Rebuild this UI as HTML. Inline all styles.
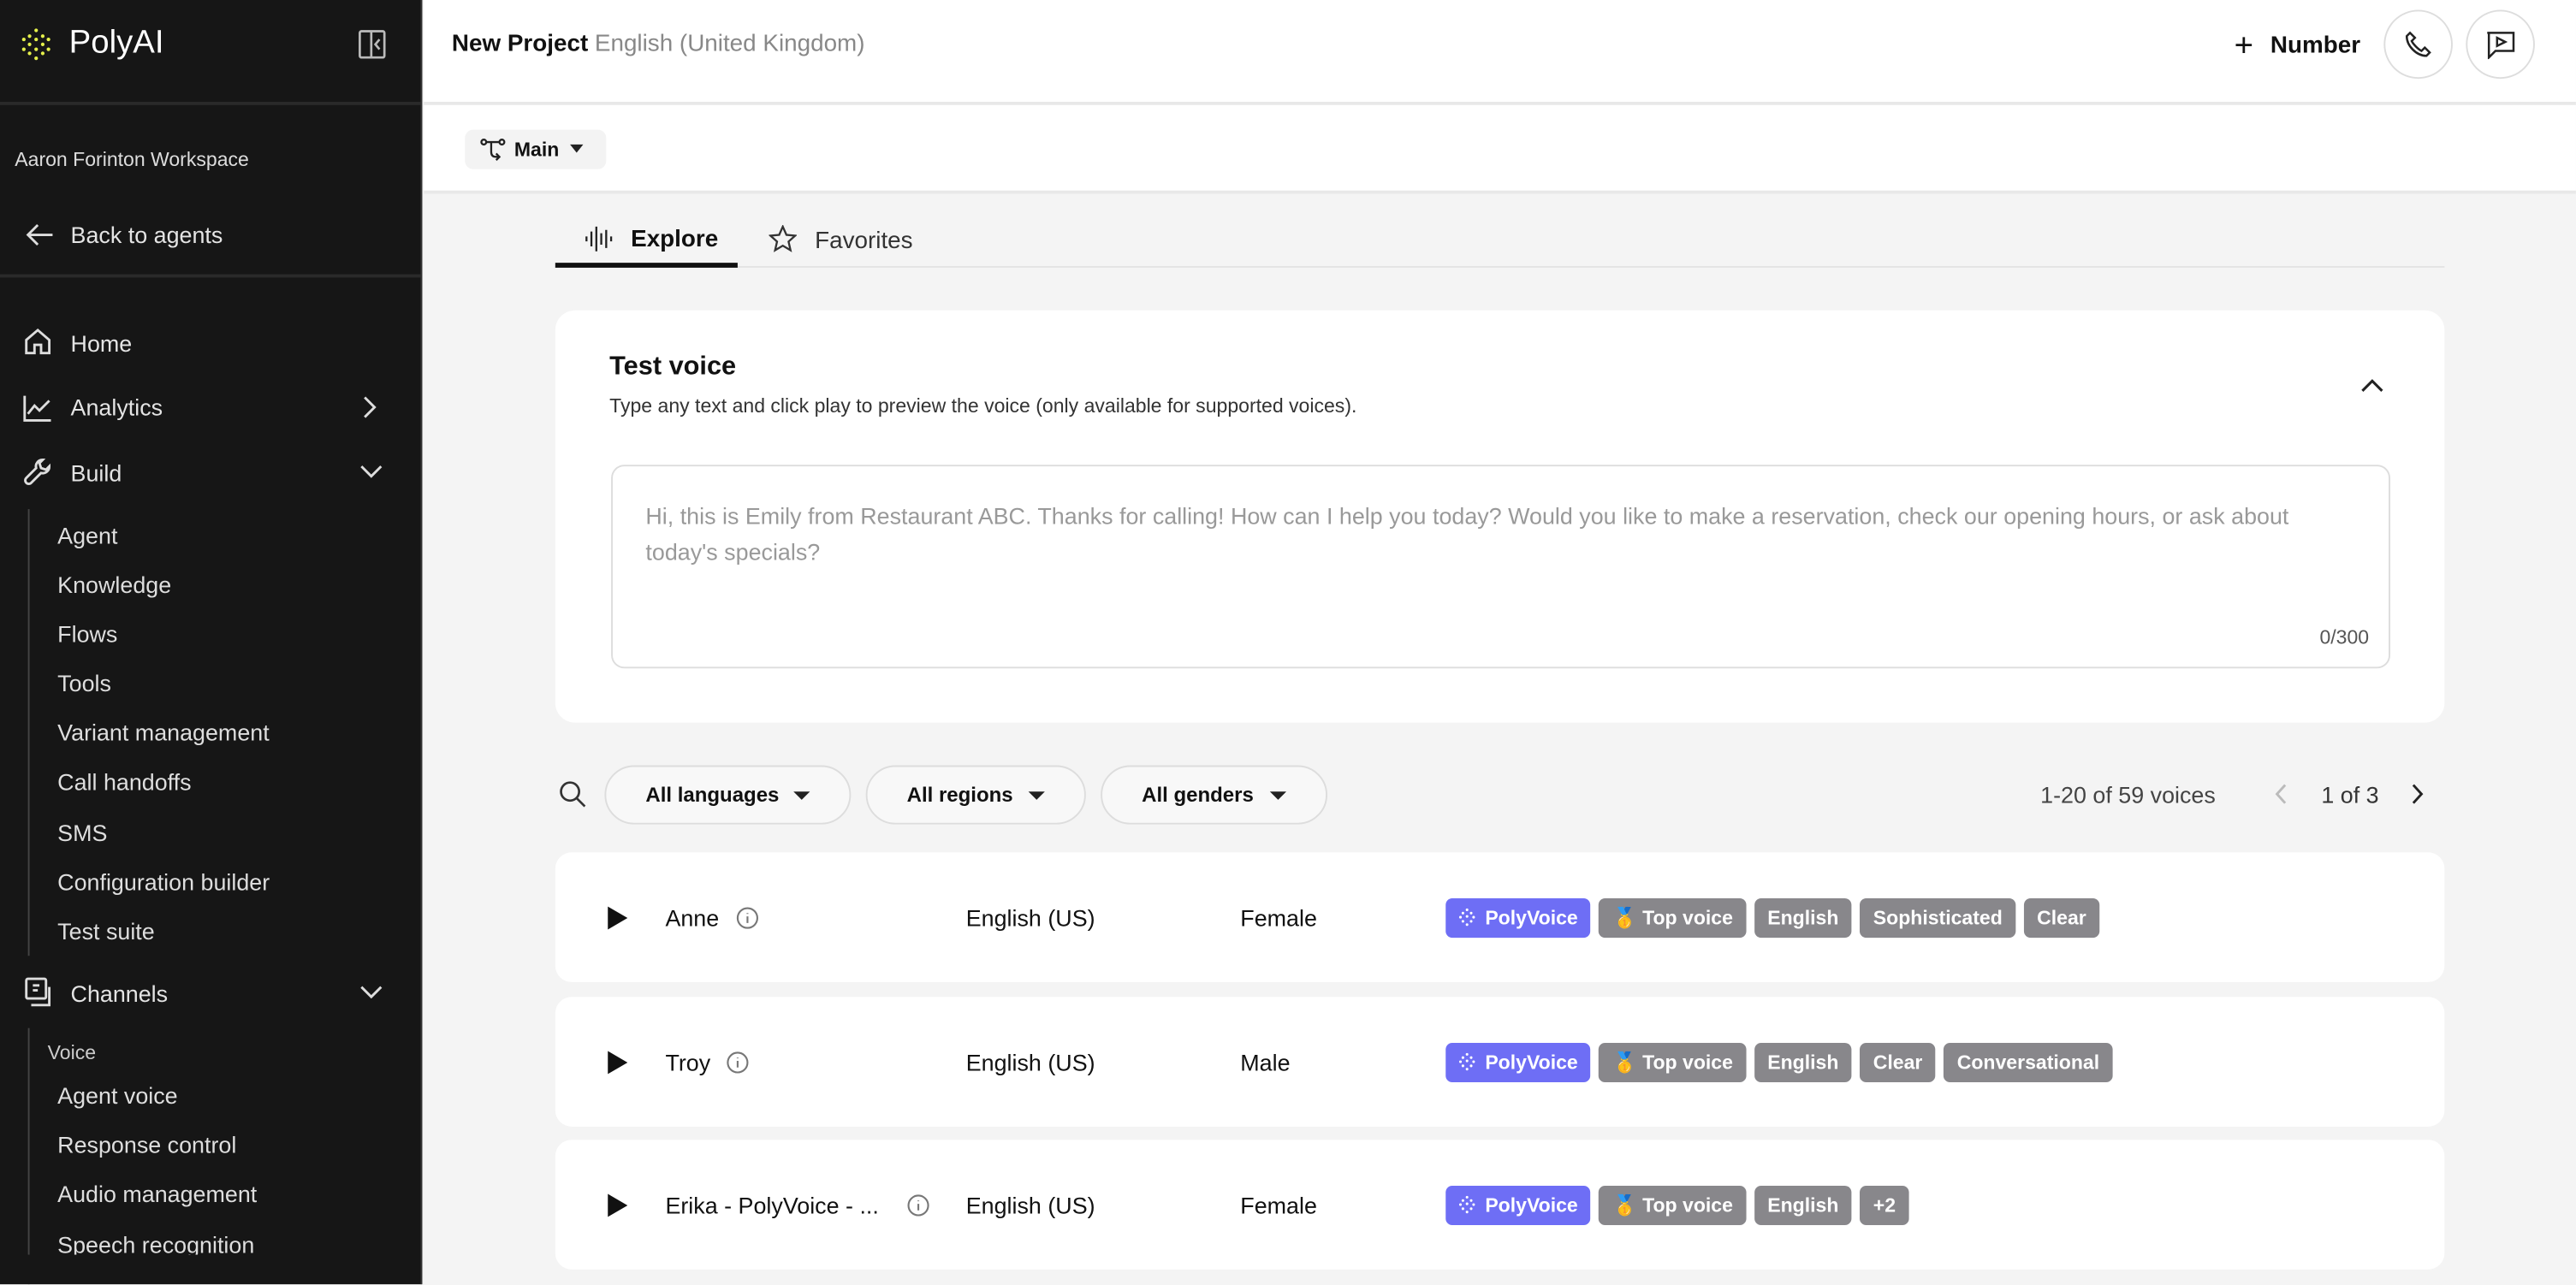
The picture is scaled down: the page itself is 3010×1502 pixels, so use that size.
<!DOCTYPE html>
<html><head><meta charset="utf-8"><style>
*{box-sizing:border-box;margin:0;padding:0}
html,body{width:3010px;height:1502px;overflow:hidden;background:#f4f4f4}
#w{width:1568px;height:782px;transform:scale(1.9196);transform-origin:0 0;position:relative;font-family:"Liberation Sans",sans-serif;color:#111}
.a{position:absolute;white-space:nowrap}
#sb{position:absolute;left:0;top:0;width:257px;height:782px;background:#161616;border-right:1px solid #333;color:#ddd;overflow:hidden}
.hr{position:absolute;left:0;width:257px;height:2px;background:#2a2a2a}
.ni{position:absolute;left:43px;font-size:14px;color:#e4e4e4}
.si{position:absolute;left:35px;font-size:14px;color:#dedede}
.ic{position:absolute;left:14px}
.tag{display:inline-block;height:24px;line-height:24px;padding:0 8px;border-radius:4px;background:#88878b;color:#fff;font-size:12px;font-weight:bold;margin-right:5px;vertical-align:top}
.tag.p{background:#6e6ef5}
.row{position:absolute;left:338px;width:1150px;height:79px;background:#fff;border-radius:10px}
.row .a{top:50%;transform:translateY(-50%);font-size:14px}
.pill{position:absolute;top:466px;height:36px;border:1px solid #ddd;border-radius:18px;background:#f8f8f8;font-size:12.5px;font-weight:bold;line-height:34px;padding-left:24px}
.pill:after{content:"";position:absolute;right:24px;top:15px;border:5px solid transparent;border-top:5px solid #222}
</style></head><body><div id="w">
<svg width="0" height="0" style="position:absolute"><defs><g id="pv" fill="#fff"><circle cx="5" cy="1" r=".8"/><circle cx="2.5" cy="3" r=".8"/><circle cx="7.5" cy="3" r=".8"/><circle cx="1" cy="5.5" r=".8"/><circle cx="9" cy="5.5" r=".8"/><circle cx="5" cy="5" r=".8"/><circle cx="2.5" cy="8" r=".8"/><circle cx="7.5" cy="8" r=".8"/><circle cx="5" cy="10" r=".8"/></g></defs></svg>
<div id="sb">
 <svg class="a" style="left:13px;top:17px" width="18" height="20" viewBox="0 0 18 20" fill="#e5f04b"><circle cx="9" cy="1.5" r="1.1"/><circle cx="5" cy="5" r="1.1"/><circle cx="13" cy="5" r="1.1"/><circle cx="1.5" cy="7" r="1.1"/><circle cx="16.5" cy="7" r="1.1"/><circle cx="9" cy="7" r="1.1"/><circle cx="5" cy="10" r="1.1"/><circle cx="13" cy="10" r="1.1"/><circle cx="1.5" cy="13" r="1.1"/><circle cx="16.5" cy="13" r="1.1"/><circle cx="9" cy="13" r="1.1"/><circle cx="5" cy="15.5" r="1.1"/><circle cx="13" cy="15.5" r="1.1"/><circle cx="9" cy="18.5" r="1.1"/></svg>
 <div class="a" style="left:42px;top:15px;font-size:20px;color:#fff">PolyAI</div>
 <svg class="a" style="left:218px;top:18px" width="17" height="18" viewBox="0 0 17 18" fill="none" stroke="#bbb" stroke-width="1.4"><rect x="1" y="1" width="15" height="16" rx="1"/><path d="M8 1v16M13 6l-2.5 3 2.5 3"/></svg>
 <div class="hr" style="top:62px"></div>
 <div class="a" style="left:9px;top:90px;font-size:12px;color:#ddd">Aaron Forinton Workspace</div>
 <svg class="a" style="left:15px;top:135px" width="18" height="16" viewBox="0 0 18 16" fill="none" stroke="#ddd" stroke-width="1.5"><path d="M17 8H2M8 2L2 8l6 6"/></svg>
 <div class="ni" style="top:135px">Back to agents</div>
 <div class="hr" style="top:167px"></div>
 <svg class="ic" style="top:199px" width="18" height="18" viewBox="0 0 18 18" fill="none" stroke="#ddd" stroke-width="1.5"><path d="M2 8l7-6 7 6v8H11v-5H7v5H2z"/></svg><div class="ni" style="top:201px">Home</div>
 <svg class="ic" style="top:239px" width="18" height="18" viewBox="0 0 18 18" fill="none" stroke="#ddd" stroke-width="1.5"><path d="M1 2v15h16M3 13l4-5 3 3 6-6"/></svg><div class="ni" style="top:240px">Analytics</div>
 <svg class="a" style="left:220px;top:240px" width="10" height="16" viewBox="0 0 10 16" fill="none" stroke="#ddd" stroke-width="1.5"><path d="M2 2l6 6-6 6"/></svg>
 <svg class="ic" style="top:278px" width="18" height="18" viewBox="0 0 18 18" fill="none" stroke="#ddd" stroke-width="1.5"><path d="M12 2a4 4 0 0 0-4 5L2 13a2 2 0 0 0 3 3l6-6a4 4 0 0 0 5-4l-2 2-3-1-1-3z"/></svg><div class="ni" style="top:280px">Build</div>
 <svg class="a" style="left:218px;top:282px" width="16" height="10" viewBox="0 0 16 10" fill="none" stroke="#ddd" stroke-width="1.5"><path d="M2 2l6 6 6-6"/></svg>
 <div class="a" style="left:17px;top:310px;width:1px;height:272px;background:#444"></div>
 <div class="si" style="top:318px">Agent</div><div class="si" style="top:348px">Knowledge</div><div class="si" style="top:378px">Flows</div><div class="si" style="top:408px">Tools</div><div class="si" style="top:438px">Variant management</div><div class="si" style="top:468px">Call handoffs</div><div class="si" style="top:499px">SMS</div><div class="si" style="top:529px">Configuration builder</div><div class="si" style="top:559px">Test suite</div>
 <svg class="ic" style="top:595px" width="18" height="18" viewBox="0 0 18 18" fill="none" stroke="#ddd" stroke-width="1.5"><rect x="2" y="1" width="12" height="12" rx="1"/><path d="M5 17h11V6M6 5h4M6 8h3"/></svg><div class="ni" style="top:597px">Channels</div>
 <svg class="a" style="left:218px;top:599px" width="16" height="10" viewBox="0 0 16 10" fill="none" stroke="#ddd" stroke-width="1.5"><path d="M2 2l6 6 6-6"/></svg>
 <div class="a" style="left:17px;top:626px;width:1px;height:160px;background:#444"></div>
 <div class="a" style="left:29px;top:634px;font-size:12px;color:#ccc">Voice</div>
 <div class="si" style="top:659px">Agent voice</div><div class="si" style="top:689px">Response control</div><div class="si" style="top:719px">Audio management</div><div class="si" style="top:750px">Speech recognition</div>
 <div class="a" style="left:0;top:764px;width:257px;height:18px;background:#161616"></div>
</div>
<div class="a" style="left:258px;top:0;width:1310px;height:64px;background:#fff;border-bottom:2px solid #e8e8e8"></div>
<div class="a" style="left:275px;top:19px;font-size:14.5px;font-weight:bold">New Project</div>
<div class="a" style="left:362px;top:19px;font-size:14.5px;color:#888">English (United Kingdom)</div>
<div class="a" style="left:1360px;top:17px;font-size:20px">+</div>
<div class="a" style="left:1382px;top:20px;font-size:14.5px;font-weight:bold">Number</div>
<div class="a" style="left:1451px;top:6px;width:42px;height:42px;border:1px solid #ddd;border-radius:50%"></div>
<svg class="a" style="left:1464px;top:19px" width="16" height="16" viewBox="0 0 16 16" fill="none" stroke="#222" stroke-width="1.3"><path d="M3 1l3 3-2 2c1 2 4 5 6 6l2-2 3 3-2 2C7 15 1 9 1 3z"/></svg>
<div class="a" style="left:1501px;top:6px;width:42px;height:42px;border:1px solid #ddd;border-radius:50%"></div>
<svg class="a" style="left:1513px;top:19px" width="18" height="17" viewBox="0 0 18 17" fill="none" stroke="#222" stroke-width="1.3"><path d="M1 1h16v11H6l-4 4V1z"/><path d="M7 4l5 2.5L7 9z"/></svg>
<div class="a" style="left:258px;top:64px;width:1310px;height:54px;background:#fff;border-bottom:2px solid #e8e8e8"></div>
<div class="a" style="left:283px;top:79px;width:86px;height:24px;background:#f3f3f3;border-radius:5px"></div>
<svg class="a" style="left:292px;top:84px" width="16" height="14" viewBox="0 0 16 14" fill="none" stroke="#222" stroke-width="1.2"><circle cx="2.5" cy="2.5" r="1.5"/><circle cx="13.5" cy="2.5" r="1.5"/><path d="M4 2.5h8M7 2.5v6c0 2 1 3 3 3h2M10 9.5l2 2-2 2"/></svg>
<div class="a" style="left:313px;top:84px;font-size:12px;font-weight:bold">Main</div>
<div class="a" style="left:347px;top:88px;border:4.5px solid transparent;border-top:5px solid #222"></div>
<div class="a" style="left:338px;top:162px;width:1150px;height:1px;background:#e3e3e3"></div>
<div class="a" style="left:338px;top:160px;width:111px;height:3px;background:#111"></div>
<svg class="a" style="left:356px;top:137px" width="18" height="17" viewBox="0 0 18 17" fill="none" stroke="#222" stroke-width="1.2"><path d="M1 7v3M4 4v9M7 1v15M10 5v7M13 3v11M16 7v3"/></svg>
<div class="a" style="left:384px;top:138px;font-size:14.5px;font-weight:bold">Explore</div>
<svg class="a" style="left:468px;top:137px" width="17" height="17" viewBox="0 0 17 17" fill="none" stroke="#333" stroke-width="1.2"><path d="M8.5 1l2.2 5 5.3.5-4 3.6 1.2 5.3-4.7-2.8-4.7 2.8 1.2-5.3-4-3.6 5.3-.5z"/></svg>
<div class="a" style="left:496px;top:139px;font-size:14.5px;color:#333">Favorites</div>
<div class="a" style="left:338px;top:189px;width:1150px;height:251px;background:#fff;border-radius:12px"></div>
<div class="a" style="left:371px;top:215px;font-size:16px;font-weight:bold">Test voice</div>
<div class="a" style="left:371px;top:240px;font-size:12px;color:#333">Type any text and click play to preview the voice (only available for supported voices).</div>
<svg class="a" style="left:1437px;top:230px" width="14" height="9" viewBox="0 0 14 9" fill="none" stroke="#222" stroke-width="1.6"><path d="M1 8l6-6 6 6"/></svg>
<div class="a" style="left:372px;top:283px;width:1083px;height:124px;border:1px solid #ddd;border-radius:8px"></div>
<div class="a" style="left:393px;top:303px;font-size:14px;color:#999;line-height:22px;white-space:normal;width:1040px">Hi, this is Emily from Restaurant ABC. Thanks for calling! How can I help you today? Would you like to make a reservation, check our opening hours, or ask about today's specials?</div>
<div class="a" style="left:1412px;top:381px;font-size:12px;color:#555">0/300</div>
<svg class="a" style="left:340px;top:475px" width="17" height="17" viewBox="0 0 17 17" fill="none" stroke="#333" stroke-width="1.4"><circle cx="7" cy="7" r="5.5"/><path d="M11 11l5 5"/></svg>
<div class="pill" style="left:368px;width:150px">All languages</div>
<div class="pill" style="left:527px;width:134px">All regions</div>
<div class="pill" style="left:670px;width:138px">All genders</div>
<div class="a" style="left:1242px;top:476px;font-size:14px;color:#444">1-20 of 59 voices</div>
<svg class="a" style="left:1384px;top:477px" width="9" height="13" viewBox="0 0 9 13" fill="none" stroke="#bbb" stroke-width="1.5"><path d="M7 1L2 6.5 7 12"/></svg>
<div class="a" style="left:1413px;top:476px;font-size:14px;color:#333">1 of 3</div>
<svg class="a" style="left:1467px;top:477px" width="9" height="13" viewBox="0 0 9 13" fill="none" stroke="#222" stroke-width="1.5"><path d="M2 1l5 5.5L2 12"/></svg>

<div class="row" style="top:519px">
 <svg class="a" style="left:31px" width="14" height="16" viewBox="0 0 14 16"><path d="M1 1l12 7-12 7z" fill="#111"/></svg>
 <div class="a" style="left:67px">Anne</div>
 <svg class="a" style="left:110px" width="14" height="14" viewBox="0 0 14 14" fill="none" stroke="#777" stroke-width="1.1"><circle cx="7" cy="7" r="6"/><path d="M7 6v4M7 4v.5"/></svg>
 <div class="a" style="left:250px">English (US)</div>
 <div class="a" style="left:417px">Female</div>
 <div class="a" style="left:542px"><span class="tag p"><svg width="10" height="11" style="vertical-align:-1px;margin-right:6px"><use href="#pv"/></svg>PolyVoice</span><span class="tag">🥇 Top voice</span><span class="tag">English</span><span class="tag">Sophisticated</span><span class="tag">Clear</span></div>
</div>
<div class="row" style="top:607px">
 <svg class="a" style="left:31px" width="14" height="16" viewBox="0 0 14 16"><path d="M1 1l12 7-12 7z" fill="#111"/></svg>
 <div class="a" style="left:67px">Troy</div>
 <svg class="a" style="left:104px" width="14" height="14" viewBox="0 0 14 14" fill="none" stroke="#777" stroke-width="1.1"><circle cx="7" cy="7" r="6"/><path d="M7 6v4M7 4v.5"/></svg>
 <div class="a" style="left:250px">English (US)</div>
 <div class="a" style="left:417px">Male</div>
 <div class="a" style="left:542px"><span class="tag p"><svg width="10" height="11" style="vertical-align:-1px;margin-right:6px"><use href="#pv"/></svg>PolyVoice</span><span class="tag">🥇 Top voice</span><span class="tag">English</span><span class="tag">Clear</span><span class="tag">Conversational</span></div>
</div>
<div class="row" style="top:694px">
 <svg class="a" style="left:31px" width="14" height="16" viewBox="0 0 14 16"><path d="M1 1l12 7-12 7z" fill="#111"/></svg>
 <div class="a" style="left:67px">Erika - PolyVoice - ...</div>
 <svg class="a" style="left:214px" width="14" height="14" viewBox="0 0 14 14" fill="none" stroke="#777" stroke-width="1.1"><circle cx="7" cy="7" r="6"/><path d="M7 6v4M7 4v.5"/></svg>
 <div class="a" style="left:250px">English (US)</div>
 <div class="a" style="left:417px">Female</div>
 <div class="a" style="left:542px"><span class="tag p"><svg width="10" height="11" style="vertical-align:-1px;margin-right:6px"><use href="#pv"/></svg>PolyVoice</span><span class="tag">🥇 Top voice</span><span class="tag">English</span><span class="tag">+2</span></div>
</div>
</div></body></html>
